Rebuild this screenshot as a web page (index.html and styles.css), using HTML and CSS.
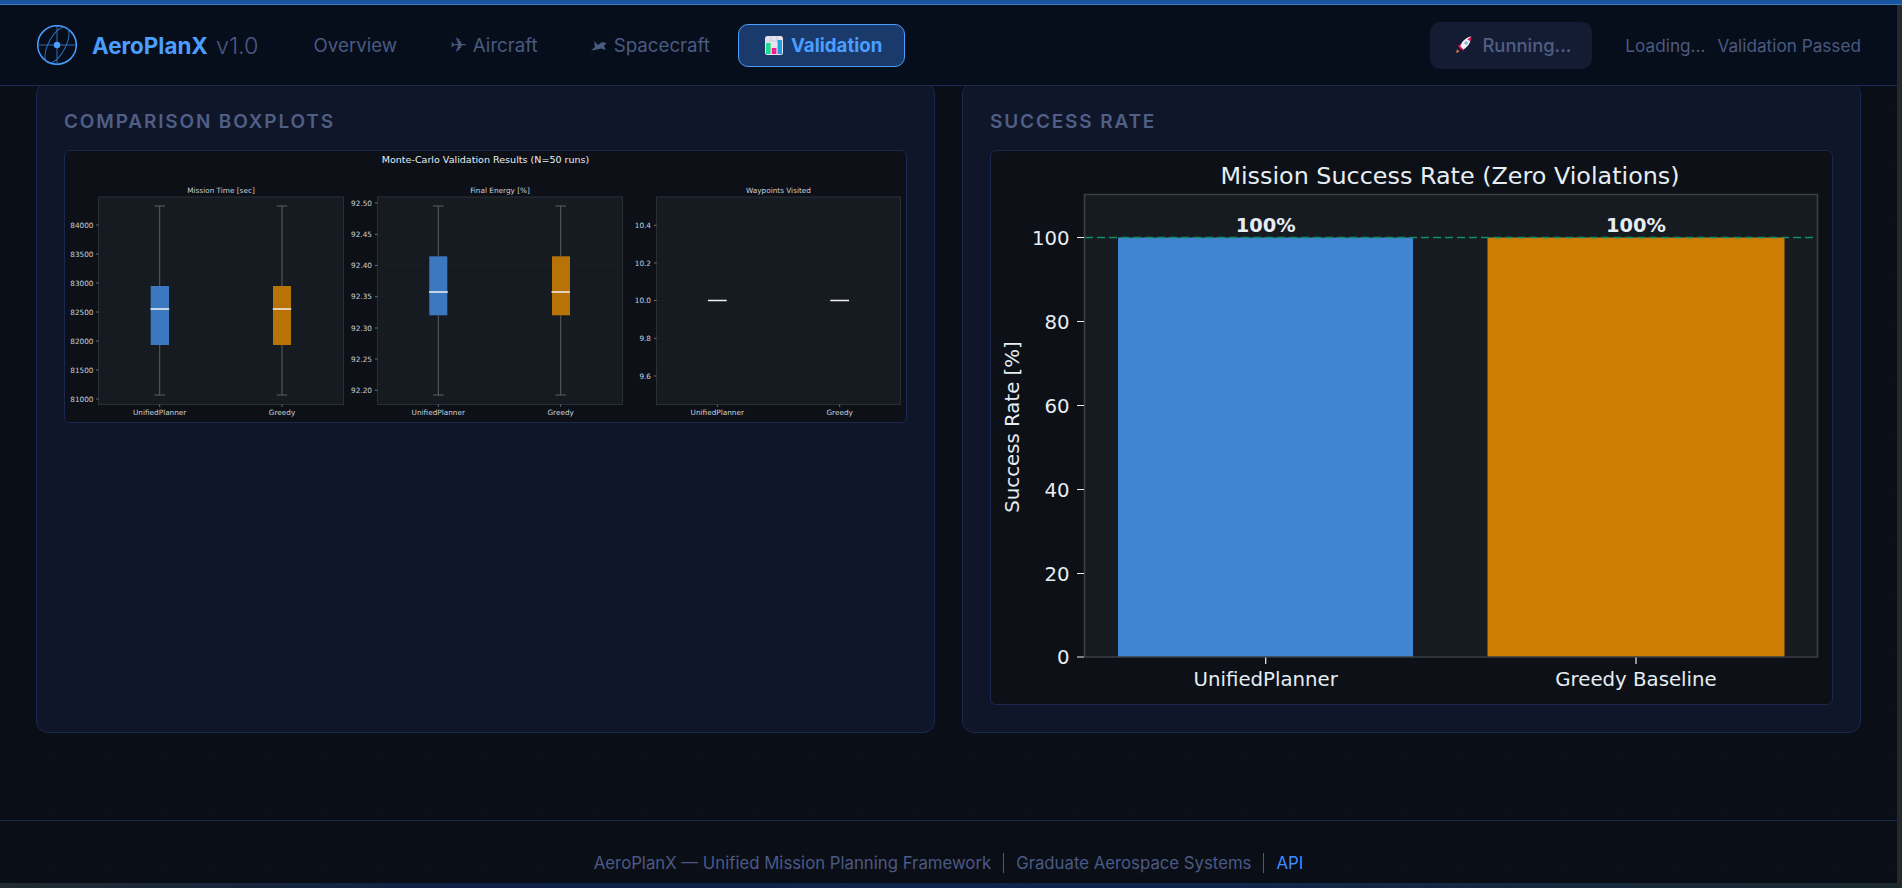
FILE: index.html
```html
<!DOCTYPE html>
<html lang="en">
<head>
<meta charset="utf-8">
<title>AeroPlanX</title>
<link rel="stylesheet" href="styles.css">
</head>
<body>
<div class="topbar"></div>
<div class="window">
  <div class="shell">
    <header class="header">
      <div class="brand">
        <svg class="logo" viewBox="0 0 40 40" fill="none">
          <circle cx="20" cy="20" r="19.3" class="logo-ring"/>
          <path d="M1 20H39M20 1V39" class="logo-thin"/>
          <ellipse cx="20" cy="20" rx="8.5" ry="20" transform="rotate(28 20 20)" class="logo-thin"/>
          <circle cx="20" cy="20" r="3.2" class="logo-dot"/>
        </svg>
        <span class="brand-name">AeroPlanX</span>
        <span class="brand-ver">v1.0</span>
      </div>
      <nav class="nav">
        <a class="nav-item">Overview</a>
        <a class="nav-item"><span class="plane">✈</span>Aircraft</a>
        <a class="nav-item">
          <svg class="sat" viewBox="0 0 16 11"><path d="M0 10.5 4 7 3 1 7 5 11 2 15.5 3 13 6 15 10 10 8.5 6 9.5Z"/></svg>Spacecraft</a>
        <a class="nav-item active">
          <svg class="chart-ico" viewBox="0 0 18 19">
            <rect width="18" height="19" rx="2.5" class="ci-bg"/>
            <path d="M.5 5H17.5M6 0V5M12 0V5" class="ci-line"/>
            <rect x="1" y="7" width="4.6" height="11" class="ci-g"/>
            <rect x="6.8" y="12" width="4.6" height="6" class="ci-p"/>
            <rect x="12.6" y="4" width="4.4" height="14" class="ci-b"/>
          </svg>Validation</a>
      </nav>
      <div class="status">
        <button class="run-btn" type="button">
          <svg class="rocket" viewBox="0 0 18 18">
            <path d="M1.2 17 2 13.2 4.6 15.6Z" class="r-flame"/>
            <path d="M3 9.6 6.2 7.8 10 11.8 8 15 6.6 13.4 4.6 12.4Z" class="r-red"/>
            <path d="M5.4 10.4C6.4 6 10.2 1.8 15.8.6 16.2 6.4 12.8 11 8.6 13.4Z" class="r-white"/>
            <path d="M12.4 3.4C13.6 2.4 14.8 1.4 16.6.4 16.4 2.4 16 3.8 15.3 5.2Z" class="r-red"/>
            <circle cx="11.2" cy="7" r="1.8" class="r-win"/>
          </svg>Running...</button>
        <span class="status-text">Loading...</span>
        <span class="status-text">Validation Passed</span>
      </div>
    </header>

    <main class="main">
      <div class="grid">
        <section class="card">
          <h2 class="card-title">COMPARISON BOXPLOTS</h2>
          <div class="figure">
            <svg class="plot-box" viewBox="65 151 841 271">
              <text x="485.5" y="163.2" class="fs-sup">Monte-Carlo Validation Results (N=50 runs)</text>

              <!-- panel 1 -->
              <rect x="98.5" y="197" width="245" height="207.5" class="axes"/>
              <path d="M98.5 225H343.5M98.5 254H343.5M98.5 283H343.5M98.5 312H343.5M98.5 341H343.5M98.5 370H343.5M98.5 399H343.5" class="grid-l"/>
              <text x="221" y="192.5" class="fs-t">Mission Time [sec]</text>
              <path d="M96 225H98.5M96 254H98.5M96 283H98.5M96 312H98.5M96 341H98.5M96 370H98.5M96 399H98.5M159.7 404.5V407M282 404.5V407" class="tick-s"/>
              <text x="93.5" y="227.6" class="fs-y">84000</text>
              <text x="93.5" y="256.6" class="fs-y">83500</text>
              <text x="93.5" y="285.6" class="fs-y">83000</text>
              <text x="93.5" y="314.6" class="fs-y">82500</text>
              <text x="93.5" y="343.6" class="fs-y">82000</text>
              <text x="93.5" y="372.6" class="fs-y">81500</text>
              <text x="93.5" y="401.6" class="fs-y">81000</text>
              <path d="M159.7 206V286M159.7 345V395M154.4 206H165M154.4 395H165M282 206V286M282 345V395M276.7 206H287.3M276.7 395H287.3" class="whisk"/>
              <rect x="150.7" y="286" width="18.3" height="59" class="bx-b"/>
              <rect x="273" y="286" width="18" height="59" class="bx-o"/>
              <path d="M150.5 309H169.2M272.8 309H291.2" class="med"/>
              <text x="159.7" y="415.3" class="fs-t">UnifiedPlanner</text>
              <text x="282" y="415.3" class="fs-t">Greedy</text>

              <!-- panel 2 -->
              <rect x="377.5" y="197" width="245" height="207.5" class="axes"/>
              <path d="M377.5 203H622.5M377.5 234.3H622.5M377.5 265.5H622.5M377.5 296.7H622.5M377.5 328H622.5M377.5 359H622.5M377.5 390.3H622.5" class="grid-l"/>
              <text x="500" y="192.5" class="fs-t">Final Energy [%]</text>
              <path d="M375 203H377.5M375 234.3H377.5M375 265.5H377.5M375 296.7H377.5M375 328H377.5M375 359H377.5M375 390.3H377.5M438.3 404.5V407M560.7 404.5V407" class="tick-s"/>
              <text x="372" y="205.6" class="fs-y">92.50</text>
              <text x="372" y="236.9" class="fs-y">92.45</text>
              <text x="372" y="268.1" class="fs-y">92.40</text>
              <text x="372" y="299.3" class="fs-y">92.35</text>
              <text x="372" y="330.6" class="fs-y">92.30</text>
              <text x="372" y="361.6" class="fs-y">92.25</text>
              <text x="372" y="392.9" class="fs-y">92.20</text>
              <path d="M438.3 206V256.3M438.3 315.3V395M433 206H443.6M433 395H443.6M560.7 206V256.3M560.7 315.3V395M555.4 206H566M555.4 395H566" class="whisk"/>
              <rect x="429.3" y="256.3" width="18" height="59" class="bx-b"/>
              <rect x="552" y="256.3" width="18" height="59" class="bx-o"/>
              <path d="M429 292H447.8M551.5 292H570" class="med"/>
              <text x="438.3" y="415.3" class="fs-t">UnifiedPlanner</text>
              <text x="560.7" y="415.3" class="fs-t">Greedy</text>

              <!-- panel 3 -->
              <rect x="656.5" y="197" width="244" height="207.5" class="axes"/>
              <path d="M656.5 225.3H900.5M656.5 263H900.5M656.5 300.5H900.5M656.5 338.3H900.5M656.5 376H900.5" class="grid-l"/>
              <text x="778.5" y="192.5" class="fs-t">Waypoints Visited</text>
              <path d="M654 225.3H656.5M654 263H656.5M654 300.5H656.5M654 338.3H656.5M654 376H656.5M717.3 404.5V407M839.7 404.5V407" class="tick-s"/>
              <text x="651" y="227.9" class="fs-y">10.4</text>
              <text x="651" y="265.6" class="fs-y">10.2</text>
              <text x="651" y="303.1" class="fs-y">10.0</text>
              <text x="651" y="340.9" class="fs-y">9.8</text>
              <text x="651" y="378.6" class="fs-y">9.6</text>
              <path d="M708 300.5H726.7M830.3 300.5H849" class="med"/>
              <text x="717.3" y="415.3" class="fs-t">UnifiedPlanner</text>
              <text x="839.7" y="415.3" class="fs-t">Greedy</text>
            </svg>
          </div>
        </section>

        <section class="card">
          <h2 class="card-title">SUCCESS RATE</h2>
          <div class="figure">
            <svg class="plot-rate" viewBox="991 151 841 553">
              <text x="1450" y="184" class="rt-title">Mission Success Rate (Zero Violations)</text>
              <rect x="1084.5" y="194.5" width="733" height="462.5" class="rt-axes"/>
              <rect x="1118" y="237.5" width="295" height="419.5" class="rt-blue"/>
              <rect x="1487.5" y="237.5" width="297" height="419.5" class="rt-orange"/>
              <path d="M1085 237.5H1817" class="rt-dash"/>
              <path d="M1084.5 194.5H1817.5V657H1084.5Z" class="rt-spine"/>
              <text x="1265.7" y="232" class="rt-pct">100%</text>
              <text x="1636" y="232" class="rt-pct">100%</text>
              <path d="M1077 237.5H1084M1077 321.5H1084M1077 405.5H1084M1077 489.5H1084M1077 573.5H1084M1077 657H1084M1265.7 657.5V664M1636 657.5V664" class="rt-tick"/>
              <text x="1069.5" y="244.7" class="rt-y">100</text>
              <text x="1069.5" y="328.7" class="rt-y">80</text>
              <text x="1069.5" y="412.7" class="rt-y">60</text>
              <text x="1069.5" y="496.7" class="rt-y">40</text>
              <text x="1069.5" y="580.7" class="rt-y">20</text>
              <text x="1069.5" y="664.2" class="rt-y">0</text>
              <text x="1265.7" y="686" class="rt-x">UnifiedPlanner</text>
              <text x="1636" y="686" class="rt-x">Greedy Baseline</text>
              <text transform="translate(1019 427) rotate(-90)" class="rt-x">Success Rate [%]</text>
            </svg>
          </div>
        </section>
      </div>
    </main>

    <footer class="footer">
      <span class="foot-item">AeroPlanX — Unified Mission Planning Framework</span>
      <span class="foot-item foot-sep">Graduate Aerospace Systems</span>
      <a class="foot-item foot-sep foot-link">API</a>
    </footer>
  </div>
  <div class="rail"></div>
</div>
<div class="bottombar"></div>
</body>
</html>
```
FILE: styles.css
```css
* { box-sizing: border-box; }
html, body { margin: 0; height: 100%; overflow: hidden; }
body {
  display: flex;
  flex-direction: column;
  background: #0a0e17;
  font-family: Inter, "Liberation Sans", sans-serif;
}
.topbar {
  height: 5px;
  flex: none;
  background: #19559f;
  border-bottom: 1px solid #3f7cc0;
}
.bottombar {
  height: 5px;
  flex: none;
  background: linear-gradient(90deg, #222c31 0%, #0f2148 25%, #10264f 60%, #1c2a2e 100%);
}
.window { flex: 1; display: flex; min-height: 0; }
.rail { width: 5px; flex: none; background: #25282c; }
.shell {
  flex: 1;
  min-width: 0;
  display: flex;
  flex-direction: column;
  background-color: #0a0e17;
  background-image:
    linear-gradient(rgba(120,150,210,.02) 1px, transparent 1px),
    linear-gradient(90deg, rgba(120,150,210,.02) 1px, transparent 1px);
  background-size: 54px 54px;
  background-position: 53px 51px;
}

/* header */
.header {
  position: relative;
  z-index: 2;
  flex: none;
  height: 81px;
  display: flex;
  align-items: center;
  padding: 0 36px 0 37px;
  background: #070e1b;
  border-bottom: 1px solid #1c2b52;
}
.brand { display: flex; align-items: center; }
.logo { width: 40px; height: 40px; flex: none; margin-right: 15px; }
.logo-ring { stroke: #4a9eff; stroke-width: 1.5; fill: none; }
.logo-thin { stroke: #3577c4; stroke-width: .9; fill: none; }
.logo-dot { fill: #4a9eff; }
.brand-name { font-size: 22.4px; font-weight: 700; color: #4a9eff; }
.brand-ver { font-size: 23.4px; font-weight: 300; color: #4a5a80; margin-left: 8px; }

.nav { display: flex; align-items: center; gap: 3px; margin-left: 30px; }
.nav-item {
  display: flex;
  align-items: center;
  height: 43px;
  padding: 0 24px;
  border: 1px solid transparent;
  border-radius: 10px;
  font-size: 18.7px;
  font-weight: 400;
  color: #4a5a80;
}
.plane { font-family: "DejaVu Sans", sans-serif; font-size: 20px; margin-right: 6px; }
.sat { width: 16px; height: 11px; margin-right: 7px; fill: #4a5a80; }
.nav-item.active {
  background: #1a3a6b;
  border-color: #4a9eff;
  color: #4a9eff;
  font-weight: 700;
  padding: 0 21.5px 0 26px;
}
.chart-ico { width: 18px; height: 19px; margin-right: 8px; }
.ci-bg { fill: #e6e2ee; }
.ci-line { stroke: #c6c2d0; stroke-width: .7; fill: none; }
.ci-g { fill: #1fdc8c; }
.ci-p { fill: #fb1b8e; }
.ci-b { fill: #209fdc; }

.status { margin-left: auto; display: flex; align-items: center; gap: 12px; }
.run-btn {
  display: flex;
  align-items: center;
  gap: 9px;
  height: 47px;
  padding: 0 21px 0 25.5px;
  margin-right: 21px;
  border: 0;
  border-radius: 10px;
  background: #141c33;
  color: #4f5f85;
  font: 500 18.4px Inter, "Liberation Sans", sans-serif;
}
.rocket { width: 18px; height: 18px; flex: none; }
.r-flame { fill: #f5793a; }
.r-red { fill: #d4124e; }
.r-white { fill: #f1f1f6; }
.r-win { fill: #7fb4dc; }
.status-text { font-size: 17.2px; color: #4a5a80; }

/* main */
.main { flex: 1; min-height: 0; padding: 0 36px; overflow: hidden; }
.grid {
  display: grid;
  grid-template-columns: 1fr 1fr;
  gap: 27px;
  margin-top: -4px;
}
.card {
  background: #0f1629;
  border: 1px solid #1a2850;
  border-radius: 12px;
  padding: 28px 27px 27px;
}
.card-title {
  margin: 0 0 17px;
  height: 22px;
  font-size: 19px;
  line-height: 22px;
  font-weight: 600;
  letter-spacing: 1.85px;
  color: #4f5f85;
}
.figure {
  border: 1px solid #1a2850;
  border-radius: 6px;
  background: #0d1117;
  overflow: hidden;
}
.plot-box { display: block; width: 841px; height: 271px; }
.plot-rate { display: block; width: 841px; height: 553px; }

/* small boxplots */
.fs-sup, .fs-t, .fs-y { font-family: "DejaVu Sans", sans-serif; fill: #c9d1d9; }
.fs-sup { font-size: 9.55px; text-anchor: middle; fill: #e6edf3; }
.fs-t { font-size: 7.3px; text-anchor: middle; }
.fs-y { font-size: 7.3px; text-anchor: end; }
.axes { fill: #161b22; stroke: #2a2f36; stroke-width: 1; }
.grid-l { stroke: rgba(255,255,255,.02); stroke-width: 1; fill: none; }
.tick-s { stroke: #8b949e; stroke-width: .7; fill: none; }
.whisk { stroke: #6d7277; stroke-width: .8; fill: none; }
.bx-b { fill: #3b78c0; }
.bx-o { fill: #b87308; }
.med { stroke: #f2f2f2; stroke-width: 1.4; fill: none; }

/* success chart */
.rt-title, .rt-pct, .rt-y, .rt-x { font-family: "DejaVu Sans", sans-serif; fill: #e6edf3; }
.rt-title { font-size: 23.85px; text-anchor: middle; }
.rt-pct { font-size: 19.4px; font-weight: 700; text-anchor: middle; }
.rt-y { font-size: 19.7px; text-anchor: end; }
.rt-x { font-size: 19.75px; text-anchor: middle; }
.rt-axes { fill: #161b22; }
.rt-spine { fill: none; stroke: #3a3f45; stroke-width: 1.6; }
.rt-blue { fill: #4184d4; }
.rt-orange { fill: #cd7d04; }
.rt-dash { stroke: #0f8f62; stroke-width: 1.6; stroke-dasharray: 8 4; fill: none; }
.rt-tick { stroke: #e6edf3; stroke-width: 1.2; fill: none; }

/* footer */
.footer {
  flex: none;
  height: 63px;
  display: flex;
  justify-content: center;
  align-items: center;
  padding-top: 22px;
  border-top: 1px solid #1a2850;
  font-size: 16.75px;
  color: #4a5a85;
}
.foot-item { display: block; line-height: 20px; white-space: nowrap; }
.foot-sep { margin-left: 12px; padding-left: 12px; border-left: 1px solid #4a5a85; }
.foot-link { color: #3f8cff; }
```
